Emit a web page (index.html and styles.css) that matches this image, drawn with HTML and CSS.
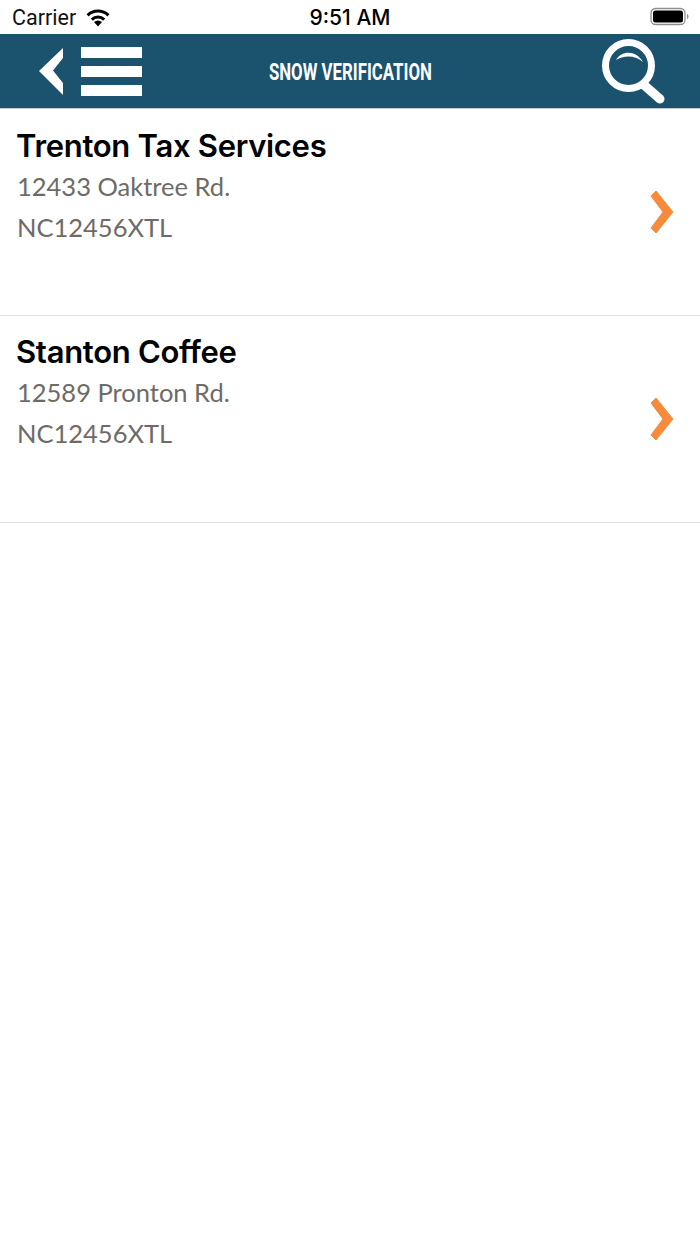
FILE: index.html
```html
<!DOCTYPE html>
<html lang="en">
<head>
  <meta charset="UTF-8" />
  <title>Snow Verification</title>
  <link rel="stylesheet" href="styles.css">
</head>
<body>
  <div class="status-bar">
    <div class="status-left">
      <span class="carrier">Carrier</span>
      <svg class="wifi" width="26" height="19" viewBox="0 0 26 19">
        <path d="M13 18.5 L9 14 A6 6 0 0 1 17 14 Z" fill="#000"/>
        <path d="M6.8 11.6 A9 9 0 0 1 19.2 11.6" fill="none" stroke="#000" stroke-width="3"/>
        <path d="M2.6 7.3 A15 15 0 0 1 23.4 7.3" fill="none" stroke="#000" stroke-width="3"/>
      </svg>
    </div>
    <span class="clock">9:51 AM</span>
    <svg class="battery" width="42" height="20" viewBox="0 0 42 20">
      <rect x="1" y="1.5" width="34" height="16" rx="4.5" fill="none" stroke="#8e8e8e" stroke-width="1.3"/>
      <rect x="3" y="3.5" width="30" height="12" rx="2.5" fill="#000"/>
      <path d="M37 7 C39 7.5 39 11.5 37 12 Z" fill="#8e8e8e"/>
    </svg>
  </div>

  <header class="nav-bar">
    <div class="nav-left">
      <svg class="back" width="24" height="48" viewBox="0 0 24 48">
        <path d="M24 1 L24 11 L14 23.5 L24 36 L24 48 L0 24 Z" fill="#fff"/>
      </svg>
      <div class="burger">
        <span></span>
        <span></span>
        <span></span>
      </div>
    </div>
    <h1 class="nav-title"><span>SNOW VERIFICATION</span></h1>
    <svg class="search" width="66" height="66" viewBox="0 0 66 66">
      <circle cx="28.5" cy="27.5" r="23" fill="none" stroke="#fff" stroke-width="7"/>
      <path d="M16 22 C22 12 36 12 43 24 C35 17 24 17 16 22 Z" fill="#fff"/>
      <path d="M44 47 L60 61" stroke="#fff" stroke-width="9" stroke-linecap="round"/>
    </svg>
  </header>

  <ul class="list">
    <li class="list-row">
      <div class="row-text">
        <div class="row-name">Trenton Tax Services</div>
        <div class="row-line">12433 Oaktree Rd.</div>
        <div class="row-line">NC12456XTL</div>
      </div>
      <svg class="chevron" width="24" height="44" viewBox="0 0 24 44">
        <path d="M6 1 L23 22 L6 43 L1 38 L13 22 L1 6 Z" fill="#f68b3c" stroke="#f68b3c" stroke-linejoin="round"/>
      </svg>
    </li>
    <li class="list-row">
      <div class="row-text">
        <div class="row-name">Stanton Coffee</div>
        <div class="row-line">12589 Pronton Rd.</div>
        <div class="row-line">NC12456XTL</div>
      </div>
      <svg class="chevron" width="24" height="44" viewBox="0 0 24 44">
        <path d="M6 1 L23 22 L6 43 L1 38 L13 22 L1 6 Z" fill="#f68b3c" stroke="#f68b3c" stroke-linejoin="round"/>
      </svg>
    </li>
  </ul>
</body>
</html>
```
FILE: styles.css
```css
html, body { margin: 0; padding: 0; background: #fff; }
body { width: 700px; height: 1244px; overflow: hidden; font-family: "Liberation Sans", Arial, sans-serif; }

.status-bar { height: 34px; display: flex; align-items: center; justify-content: space-between; padding: 0 8px 0 12px; position: relative; }
.status-left { display: flex; align-items: center; gap: 9px; }
.carrier { font-family: Roboto, sans-serif; font-size: 21.5px; color: #111; }
.clock { font-family: Inter, sans-serif; font-weight: 500; font-size: 21px; color: #000; position: absolute; left: 0; right: 0; text-align: center; }

.nav-bar { height: 74px; background: #1b536e; border-bottom: 1px solid #c4c8cc; display: flex; align-items: center; justify-content: space-between; padding: 0 34px 0 39px; position: relative; }
.nav-left { display: flex; align-items: center; gap: 18px; }
.burger { width: 61px; display: flex; flex-direction: column; gap: 8px; }
.burger span { display: block; height: 11px; background: #fff; }
.nav-title { position: absolute; left: 0; right: 0; margin: 0; padding-top: 1px; text-align: center; font-family: "Roboto", sans-serif; font-weight: 700; font-size: 24px; color: #fff; }
.nav-title span { display: inline-block; transform: scaleX(0.7); white-space: nowrap; }

.list { list-style: none; margin: 0; padding: 0; }
.list-row { height: 206px; border-bottom: 1px solid #e0e0e0; display: flex; align-items: center; justify-content: space-between; padding: 0 26px 0 16px; }
.list-row + .list-row .row-text { padding-top: 16px; }
.row-text { align-self: flex-start; padding-top: 17px; }
.row-name { font-family: Inter, sans-serif; font-weight: 600; font-size: 31px; letter-spacing: -0.3px; line-height: 40px; color: #000; }
.row-line { font-family: Lato, sans-serif; font-size: 25.5px; line-height: 41px; color: #6e6b67; padding-left: 1px; }
```
